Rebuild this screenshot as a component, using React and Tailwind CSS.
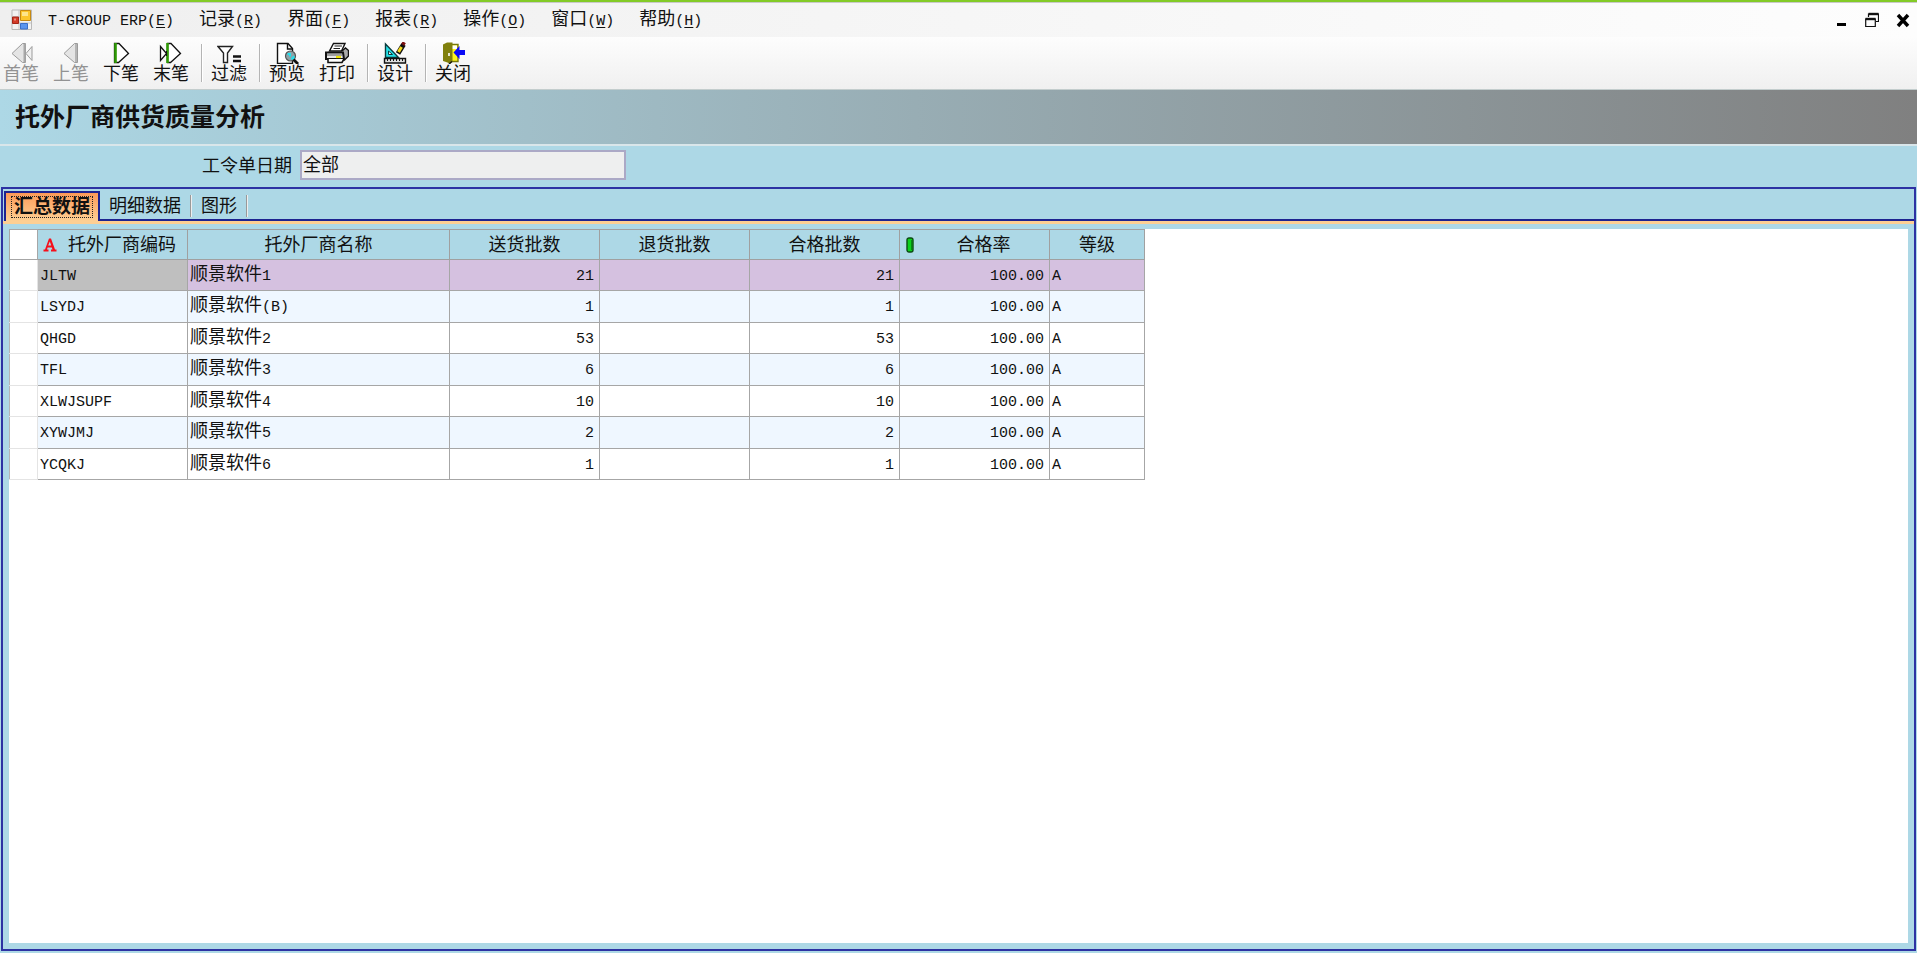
import React, { useState } from 'react';

const menus = [
    { label: 'T-GROUP ERP', hotkey: 'E' },
    { label: '记录', hotkey: 'R' },
    { label: '界面', hotkey: 'F' },
    { label: '报表', hotkey: 'R' },
    { label: '操作', hotkey: 'O' },
    { label: '窗口', hotkey: 'W' },
    { label: '帮助', hotkey: 'H' },
];

const columns = [
    { title: '托外厂商编码', width: 'w-[150px]', mark: 'sort' },
    { title: '托外厂商名称', width: 'w-[262px]' },
    { title: '送货批数', width: 'w-[150px]' },
    { title: '退货批数', width: 'w-[150px]' },
    { title: '合格批数', width: 'w-[150px]' },
    { title: '合格率', width: 'w-[150px]', mark: 'pin' },
    { title: '等级', width: 'w-[95px]' },
];

const rows = [
    ['JLTW', '顺景软件', '1', '21'],
    ['LSYDJ', '顺景软件', '(B)', '1'],
    ['QHGD', '顺景软件', '2', '53'],
    ['TFL', '顺景软件', '3', '6'],
    ['XLWJSUPF', '顺景软件', '4', '10'],
    ['XYWJMJ', '顺景软件', '5', '2'],
    ['YCQKJ', '顺景软件', '6', '1'],
];

// Latin letters and digits are half the width of a Chinese character
const Latin = ({ children }) => (
    <span className="font-['Liberation_Mono',monospace] text-[15px]">{children}</span>
);

const Icon = ({ children }) => (
    <svg width="24" height="22" viewBox="0 0 24 22" fill="none" className="shrink-0">
        {children}
    </svg>
);

const FirstIcon = () => (
    <Icon>
        <path d="M13.5 1.5L3 11.5L13.5 20.5H16.5V1.5Z" fill="#e4e4e4" stroke="#9b9b9b" />
        <path d="M15.5 2V20" stroke="#a8a8a8" strokeWidth="2" />
        <path d="M23 4.5L17 11.5L23 18.5Z" fill="#f0f0f0" stroke="#9b9b9b" />
    </Icon>
);

const PrevIcon = () => (
    <Icon>
        <path d="M15.5 1.5L5 11.5L15.5 20.5H18.5V1.5Z" fill="#e4e4e4" stroke="#9b9b9b" />
        <path d="M17 2V20" stroke="#b5b5b5" strokeWidth="2" />
    </Icon>
);

const NextIcon = () => (
    <Icon>
        <path d="M5.5 1.5H10L19.5 11.5L9.5 20.5H5.5Z" fill="#fff" stroke="#111" strokeWidth="1.3" />
        <path d="M6.5 1V21" stroke="#2f9a05" strokeWidth="2.6" />
    </Icon>
);

const LastIcon = () => (
    <Icon>
        <path d="M1.5 4.5L7.5 11.5L1.5 18.5Z" fill="#fff" stroke="#111" strokeWidth="1.3" />
        <path d="M8.5 1.5H12L21.5 11.5L11.5 20.5H8.5Z" fill="#fff" stroke="#111" strokeWidth="1.3" />
        <path d="M8.5 1V21" stroke="#2f9a05" strokeWidth="2.6" />
        <path d="M7.5 9V14" stroke="#111" />
    </Icon>
);

const FilterIcon = () => (
    <Icon>
        <path d="M1 4.5H15.5L10.5 11V20.5H6.5V11Z" fill="#fff" stroke="#222" strokeWidth="1.4" />
        <path d="M16 14.5H24M16 19H24" stroke="#111" strokeWidth="2.6" />
    </Icon>
);

const PreviewIcon = () => (
    <Icon>
        <path d="M2.5 1.5H13L17.5 6.5V21.5H2.5Z" fill="#fff" stroke="#111" strokeWidth="1.4" />
        <path d="M12.5 1.5V7H18" stroke="#111" strokeWidth="1.4" />
        <circle cx="15.5" cy="14" r="5" fill="#8fa3a8" stroke="#555" strokeWidth="1.2" />
        <path d="M12.5 12H15V14.5M16 16.5H18.5V14" stroke="#22e0ee" strokeWidth="2" />
        <path d="M18.5 17.5L23 22" stroke="#111" strokeWidth="2.8" />
    </Icon>
);

const PrintIcon = () => (
    <Icon>
        <path d="M8.5 1.5H20L16.5 9H4.5Z" fill="#fff" stroke="#111" strokeWidth="1.4" />
        <path d="M9.5 4H17M8.5 6.5H15" stroke="#222" />
        <path d="M17 9L20.5 6L23.5 8.5V14L19 18.5" fill="#aaa" stroke="#111" strokeWidth="1.4" />
        <path d="M1 10.5H18L19 17H1Z" fill="#e8e8e8" stroke="#111" strokeWidth="2" />
        <path d="M2 13H17" stroke="#555" />
        <path d="M11 15H16" stroke="#f1e400" strokeWidth="2.2" />
        <path d="M3 17V20.5H17L19 17" fill="#fff" stroke="#111" strokeWidth="1.6" />
    </Icon>
);

const DesignIcon = () => (
    <Icon>
        <path d="M2.5 2V15.5H15.5Z" fill="#25e3ea" stroke="#0b3b3d" strokeWidth="1.4" />
        <path d="M5.5 9V12.5H9.5Z" fill="#fff" stroke="#0b3b3d" />
        <path d="M20.5 2.5L15 11.5" stroke="#111" strokeWidth="5" />
        <path d="M18.5 5L15.5 10" stroke="#f5dc1b" strokeWidth="3" />
        <path d="M19 0.5L22 2.5" stroke="#7b1010" strokeWidth="3" />
        <path d="M1.5 16.5H22.5V21H1.5Z" fill="#ddd" stroke="#111" strokeWidth="1.4" />
        <path d="M4.5 16V19M7.5 16V19M10.5 16V19M13.5 16V19M16.5 16V19M19.5 16V19" stroke="#111" />
    </Icon>
);

const CloseIcon = () => (
    <Icon>
        <path d="M9 2.5H17V19.5H9Z" fill="#fdf51a" stroke="#77770a" strokeWidth="1.4" />
        <path d="M11 3.5H16V7H11Z" fill="#fff" />
        <path d="M2 2.5L6 0.5H11.5V19L9 22L6.5 20.5L2 19Z" fill="#80800c" />
        <path d="M8 11V14" stroke="#fff" strokeWidth="1.6" />
        <path d="M8 22L11 19.5" stroke="#111" strokeWidth="1.4" />
        <path d="M12.5 10.5L18.5 4V8H24.5V13H18.5V17Z" fill="#0a0af5" />
    </Icon>
);

const toolGroups = [
    [
        { label: '首笔', icon: FirstIcon, disabled: true },
        { label: '上笔', icon: PrevIcon, disabled: true },
        { label: '下笔', icon: NextIcon },
        { label: '末笔', icon: LastIcon },
    ],
    [{ label: '过滤', icon: FilterIcon }],
    [
        { label: '预览', icon: PreviewIcon },
        { label: '打印', icon: PrintIcon },
    ],
    [{ label: '设计', icon: DesignIcon }],
    [{ label: '关闭', icon: CloseIcon }],
];

const AppLogo = () => (
    <svg width="22" height="22" viewBox="0 0 22 22" fill="none">
        <path d="M1 1H20.5V20.5H1Z" fill="#f2f2f2" stroke="#b9b9b9" />
        <path d="M1 8H20M8 14H20M8 1V20M14 14V20" stroke="#c4c4c4" />
        <path d="M9.5 1.5H19.5V11.5H9.5Z" fill="#fbc62c" stroke="#c78a12" />
        <path d="M11 3H17V7H11Z" fill="#fde58b" />
        <path d="M1.5 8H7.5V14.5H1.5Z" fill="#d23b28" stroke="#a32617" />
        <path d="M4 9.5V11.5" stroke="#f6a597" strokeWidth="1.6" />
        <path d="M9.5 14.5H16.5V20H9.5Z" fill="#5b95ee" stroke="#3c6fc7" />
    </svg>
);

const MenuBar = () => (
    <header className="flex h-[35px] items-center border-t border-[#c9c9c9] bg-linear-to-r from-[#efefef] to-[#fdfdfd] pr-[7px] pl-[11px]">
        <AppLogo />
        <nav className="ml-[15px] flex flex-1 items-center gap-[25px]">
            {menus.map((menu) => (
                <button key={menu.label} className="whitespace-nowrap leading-6">
                    {menu.hotkey === 'E' ? <Latin>{menu.label}</Latin> : menu.label}
                    <Latin>
                        (<u className="underline-offset-2">{menu.hotkey}</u>)
                    </Latin>
                </button>
            ))}
        </nav>
        <div className="flex items-center gap-[17px]">
            <button aria-label="Minimize">
                <svg width="14" height="16" viewBox="0 0 14 16">
                    <path d="M3 11H12V14H3Z" fill="#000" />
                </svg>
            </button>
            <button aria-label="Restore">
                <svg width="14" height="16" viewBox="0 0 14 16" fill="none" stroke="#111">
                    <path d="M3.5 5V2H13.5V9.5H11" strokeWidth="1.2" />
                    <path d="M3.5 2H13.5" strokeWidth="2.4" />
                    <path d="M0.7 7H10.3V14.5H0.7Z" strokeWidth="1.2" />
                    <path d="M0.5 7H10.5" strokeWidth="2.4" />
                </svg>
            </button>
            <button aria-label="Close">
                <svg width="14" height="16" viewBox="0 0 14 16" fill="none" stroke="#000">
                    <path d="M2 3L12 14M12 3L2 14" strokeWidth="3.4" />
                </svg>
            </button>
        </div>
    </header>
);

const ToolBar = () => (
    <div className="flex h-[53px] items-start border-b border-[#c3cdcd] bg-linear-to-b from-[#fdfdfd] to-[#f0f0f0] pt-[5px] pl-[3px]">
        {toolGroups.map((group, i) => (
            <React.Fragment key={i}>
                {i > 0 && <div className="mt-[2px] mr-2 ml-3 h-[38px] w-[2px] border-l border-[#b4b4b4] bg-white" />}
                <div className="flex gap-[14px]">
                    {group.map(({ label, icon: ToolIcon, disabled }) => (
                        <button
                            key={label}
                            disabled={disabled}
                            className="flex w-9 flex-col items-center leading-5 whitespace-nowrap disabled:text-[#929292]"
                        >
                            <ToolIcon />
                            {label}
                        </button>
                    ))}
                </div>
            </React.Fragment>
        ))}
    </div>
);

const SummaryTable = () => (
    <table className="table-fixed border-collapse">
        <thead>
            <tr className="h-[30px]">
                <th className="w-7 border border-[#a6a6a6] bg-white" aria-label="行" />
                {columns.map(({ title, width, mark }) => (
                    <th key={title} className={`${width} border border-[#a0a0a0] bg-[#add8e6] p-0 font-normal`}>
                        <div className="flex items-center px-[5px]">
                            {mark === 'sort' && (
                                <svg width="14" height="14" viewBox="0 0 14 14" className="mr-[5px] shrink-0">
                                    <path
                                        d="M6 0.5H8L12 11.5H13.5V13.5H8V11.5H9.5L8.8 9.5H4.6L4 11.5H5.5V13.5H0.5V11.5H2ZM5.2 7.5H8.2L6.8 3.5Z"
                                        fill="#f5101c"
                                        fillRule="evenodd"
                                    />
                                </svg>
                            )}
                            {mark === 'pin' && (
                                <svg width="8" height="16" viewBox="0 0 8 16" className="mr-[9px] ml-px shrink-0">
                                    <rect x="1" y="1" width="6" height="14" rx="2" fill="#0bd11b" stroke="#0a4d12" strokeWidth="1.4" />
                                    <path d="M5.5 3V13" stroke="#078a14" />
                                </svg>
                            )}
                            <span className="flex-1 leading-6 whitespace-nowrap">{title}</span>
                        </div>
                    </th>
                ))}
            </tr>
        </thead>
        <tbody>
            {rows.map(([code, name, suffix, count], i) => {
                const selected = i === 0;
                const bg = selected ? 'bg-[#d5c1e0]' : i % 2 ? 'bg-[#eff7ff]' : 'bg-white';
                const cell = `border border-[#a6a6a6] py-0 leading-6 ${bg}`;
                return (
                    <tr key={code} className="odd:h-[31px] even:h-8">
                        <td className="border border-[#e4e4e4] border-l-[#b5b5b5] bg-white" />
                        <td className={`border border-[#a6a6a6] py-0 pr-0 pl-[2px] leading-6 ${selected ? 'bg-[#bfbfbf]' : bg}`}>
                            <Latin>{code}</Latin>
                        </td>
                        <td className={`${cell} px-[2px]`}>
                            {name}
                            <Latin>{suffix}</Latin>
                        </td>
                        <td className={`${cell} px-[5px] text-right`}><Latin>{count}</Latin></td>
                        <td className={cell} />
                        <td className={`${cell} px-[5px] text-right`}><Latin>{count}</Latin></td>
                        <td className={`${cell} px-[5px] text-right`}><Latin>100.00</Latin></td>
                        <td className={`${cell} px-[2px]`}><Latin>A</Latin></td>
                    </tr>
                );
            })}
        </tbody>
    </table>
);

const tabs = ['汇总数据', '明细数据', '图形'];

const App = () => {
    const [active, setActive] = useState(0);

    return (
        <div className="flex min-h-screen flex-col border-t-2 border-[#83cb27] bg-[#add8e6] font-['Liberation_Sans','Noto_Sans_CJK_SC',sans-serif] text-[18px] text-[#111]">
            <MenuBar />
            <ToolBar />

            {/* Report title */}
            <div className="flex h-14 items-center border-b-2 border-[#d9e6ea] bg-linear-to-r from-[#add8e6] to-[#808080] px-[15px]">
                <h1 className="text-[25px] leading-8 font-bold">托外厂商供货质量分析</h1>
            </div>

            {/* Filter row */}
            <div className="flex h-[41px] items-start pt-1 pl-[202px]">
                <label htmlFor="orderDate" className="w-[98px] pt-1 leading-6">工令单日期</label>
                <input
                    id="orderDate"
                    type="text"
                    readOnly
                    value="全部"
                    className="h-[30px] w-[326px] border-2 border-[#aba9c6] bg-[#eeefef] px-px pb-1 leading-6 outline-none"
                />
            </div>

            {/* Tabs with the data grid */}
            <main className="mx-[1px] mb-[2px] flex flex-1 flex-col border-2 border-[#2d32a3]">
                <div className="flex h-[35px] items-end border-b-[3px] border-[#fdcf93] pl-px">
                    {tabs.map((tab, i) =>
                        i === active ? (
                            <button
                                key={tab}
                                className="h-[30px] border-2 border-b-0 border-[#1d2390] bg-linear-to-b from-[#fb9a58] to-[#fdcf93] px-[5px] font-bold whitespace-nowrap"
                            >
                                <span className="block w-[82px] border border-dotted border-[#222] text-center text-[19px] leading-5">{tab}</span>
                            </button>
                        ) : (
                            <div key={tab} className="flex h-[30px] items-center border-b-2 border-[#1d2390] pt-px">
                                <button onClick={() => setActive(i)} className="px-[9px] leading-6 whitespace-nowrap">
                                    {tab}
                                </button>
                                <div className="h-[22px] w-[2px] border-l border-[#999] bg-[#eee]" />
                            </div>
                        )
                    )}
                    <div className="h-[30px] flex-1 border-b-2 border-[#1d2390]" />
                </div>
                <div className="mx-[6px] mt-[5px] mb-[6px] flex-1 bg-white">
                    <SummaryTable />
                </div>
            </main>
        </div>
    );
};

export default App;
